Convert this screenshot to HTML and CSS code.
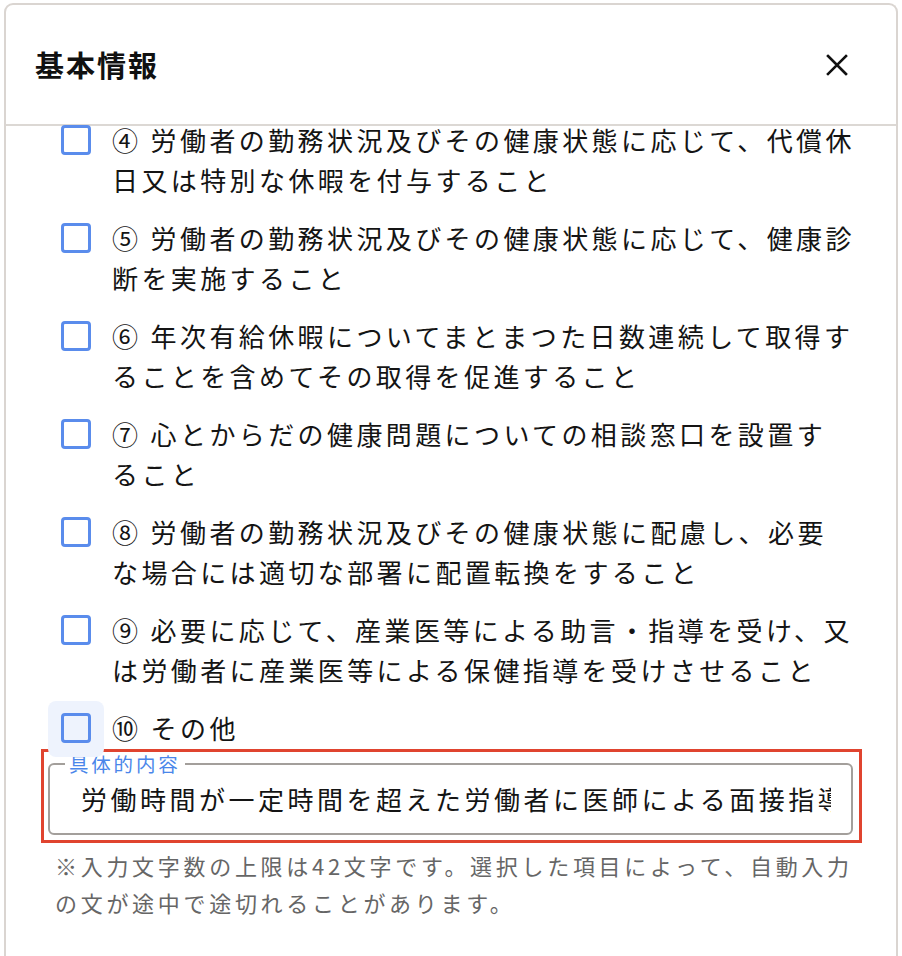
FILE: index.html
```html
<!DOCTYPE html>
<html lang="ja">
<head>
<meta charset="utf-8">
<title>基本情報</title>
<link rel="stylesheet" href="styles.css">
</head>
<body>
<div class="modal">
  <header class="modal-header">
    <h1 class="modal-title">基本情報</h1>
    <button class="close-btn" aria-label="閉じる">
      <svg width="22" height="22" viewBox="0 0 22 22"><path d="M2 2 L20 20 M20 2 L2 20" stroke="#111" stroke-width="2.6" stroke-linecap="square" fill="none"/></svg>
    </button>
  </header>
  <div class="modal-body">
    <ul class="options">
      <li class="option"><span class="checkbox"></span><span class="label">④ 労働者の勤務状況及びその健康状態に応じて、代償休<br>日又は特別な休暇を付与すること</span></li>
      <li class="option"><span class="checkbox"></span><span class="label">⑤ 労働者の勤務状況及びその健康状態に応じて、健康診<br>断を実施すること</span></li>
      <li class="option"><span class="checkbox"></span><span class="label">⑥ 年次有給休暇についてまとまつた日数連続して取得す<br>ることを含めてその取得を促進すること</span></li>
      <li class="option"><span class="checkbox"></span><span class="label">⑦ 心とからだの健康問題についての相談窓口を設置す<br>ること</span></li>
      <li class="option"><span class="checkbox"></span><span class="label">⑧ 労働者の勤務状況及びその健康状態に配慮し、必要<br>な場合には適切な部署に配置転換をすること</span></li>
      <li class="option"><span class="checkbox"></span><span class="label">⑨ 必要に応じて、産業医等による助言・指導を受け、又<br>は労働者に産業医等による保健指導を受けさせること</span></li>
      <li class="option"><span class="checkbox focused"></span><span class="label">⑩ その他</span></li>
    </ul>
    <div class="highlight">
      <fieldset class="field">
        <legend class="field-legend">具体的内容</legend>
        <div class="field-value">労働時間が一定時間を超えた労働者に医師による面接指導を実施すること</div>
      </fieldset>
    </div>
    <p class="helper">※入力文字数の上限は42文字です。選択した項目によって、自動入力<br>の文が途中で途切れることがあります。</p>
  </div>
</div>
</body>
</html>
```

FILE: styles.css
```css
html, body {
  margin: 0;
  padding: 0;
  background: #ffffff;
  overflow: hidden;
}
body {
  font-family: "Noto Sans CJK JP", "Noto Sans", sans-serif;
  color: #141414;
}
.modal {
  box-sizing: border-box;
  margin: 3px 0 0 4px;
  width: 894px;
  height: 980px;
  border: 2px solid #dad5d1;
  border-bottom: none;
  border-radius: 9px 9px 0 0;
  overflow: hidden;
  background: #fff;
}
.modal-header {
  box-sizing: border-box;
  height: 121px;
  border-bottom: 2px solid #dcd8d4;
  display: flex;
  align-items: center;
  justify-content: space-between;
  padding: 0 48px 0 29px;
}
.modal-title {
  margin: 0 0 2px 0;
  font-size: 29px;
  font-weight: 700;
  letter-spacing: 2px;
  line-height: 40px;
  color: #111;
}
.close-btn {
  border: none;
  background: none;
  padding: 0;
  width: 22px;
  height: 22px;
  display: flex;
}
.modal-body {
  padding-left: 55px;
}
.options {
  list-style: none;
  margin: -6px 0 0 0;
  padding: 0;
  display: flex;
  flex-direction: column;
  gap: 18px;
}
.option {
  position: relative;
  z-index: 0;
  display: flex;
  align-items: flex-start;
  gap: 21px;
}
.checkbox {
  position: relative;
  flex: none;
  box-sizing: border-box;
  width: 30px;
  height: 30px;
  margin-top: 5px;
  border: 3px solid #5a8cec;
  border-radius: 4px;
  background: #fff;
}
.checkbox.focused {
  background: #eef3fd;
}
.checkbox.focused::before {
  content: "";
  position: absolute;
  left: -16px;
  top: -15px;
  width: 56px;
  height: 56px;
  border-radius: 8px;
  background: #eef3fd;
  z-index: -1;
}
.label {
  font-size: 26px;
  line-height: 40px;
  letter-spacing: 3.4px;
  white-space: nowrap;
}
.highlight {
  box-sizing: border-box;
  margin: 1px 0 0 -20px;
  width: 821px;
  border: 3px solid #e0442f;
  padding: 0 6px 5px 4px;
}
.field {
  box-sizing: border-box;
  margin: 0;
  height: 83px;
  border: 2px solid #a39f9b;
  border-radius: 6px;
  padding: 0 20px 0 31px;
  min-width: 0;
}
.field-legend {
  margin-left: -16px;
  padding: 0 4px;
  font-size: 19.5px;
  line-height: 24px;
  letter-spacing: 2.8px;
  color: #4a86ea;
}
.field-value {
  font-size: 26px;
  line-height: 40px;
  letter-spacing: 3.5px;
  white-space: nowrap;
  overflow: hidden;
  margin-top: 3px;
}
.helper {
  margin: 4px 0 0 -6px;
  font-size: 22px;
  line-height: 37px;
  letter-spacing: 3.7px;
  color: #666;
  white-space: nowrap;
}
```
